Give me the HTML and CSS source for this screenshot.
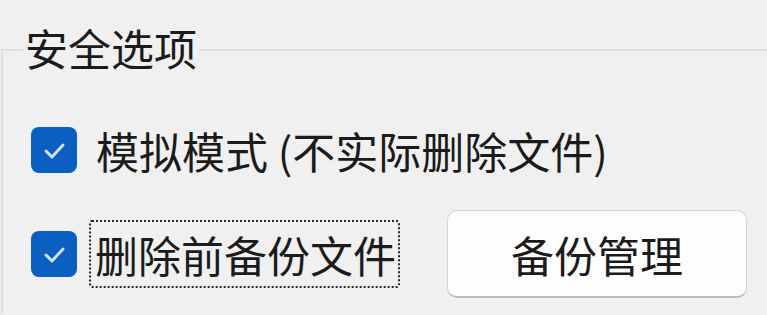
FILE: index.html
```html
<!DOCTYPE html>
<html lang="zh-CN">
<head>
    <meta charset="UTF-8">
    <title>安全选项</title>
    <link rel="stylesheet" href="styles.css">
</head>
<body>
    <fieldset class="group">
        <legend>安全选项</legend>
        <div class="row">
            <span class="check">
                <svg viewBox="0 0 46 46" width="46" height="46"><path d="M15 24 L21 30 L32 18" fill="none" stroke="#cfe1f7" stroke-width="3" stroke-linecap="round" stroke-linejoin="round"/></svg>
            </span>
            <span class="label">模拟模式 (不实际删除文件)</span>
        </div>
        <div class="row">
            <span class="check">
                <svg viewBox="0 0 46 46" width="46" height="46"><path d="M15 24 L21 30 L32 18" fill="none" stroke="#cfe1f7" stroke-width="3" stroke-linecap="round" stroke-linejoin="round"/></svg>
            </span>
            <span class="label focused">删除前备份文件</span>
            <button class="btn">备份管理</button>
        </div>
    </fieldset>
</body>
</html>
```

FILE: styles.css
```css
body {
    margin: 0;
    background-color: #f0f0f0;
    font-family: "Noto Sans CJK SC", "Noto Sans", sans-serif;
    color: #1b1b1b;
    overflow: hidden;
}
.group {
    margin: 26px 0 0 1px;
    padding: 32px 0 0 28px;
    border: 2px solid #dedede;
    border-right: none;
    border-bottom: none;
    min-width: 0;
}
.group legend {
    margin-left: -8px;
    padding: 0 2px 6px 2px;
    font-size: 43px;
    line-height: 42px;
}
.row {
    display: flex;
    align-items: center;
    height: 88px;
    margin-bottom: 16px;
}
.check {
    width: 46px;
    height: 46px;
    border-radius: 8px;
    background-color: #0b5fc0;
    flex-shrink: 0;
}
.check svg {
    display: block;
}
.label {
    font-size: 43px;
    line-height: 64px;
    margin-left: 19px;
    white-space: nowrap;
}
.focused {
    margin-left: 12px;
    padding: 0 2px 0 4px;
    border: 2px dotted #262626;
    border-radius: 3px;
}
.btn {
    margin-left: 47px;
    width: 300px;
    height: 88px;
    background-color: #fdfdfd;
    border: 1px solid #d3d3d3;
    border-bottom: 2px solid #bcbcbc;
    border-radius: 10px;
    font-family: inherit;
    font-size: 43px;
    color: #1b1b1b;
    padding: 0;
}
```
